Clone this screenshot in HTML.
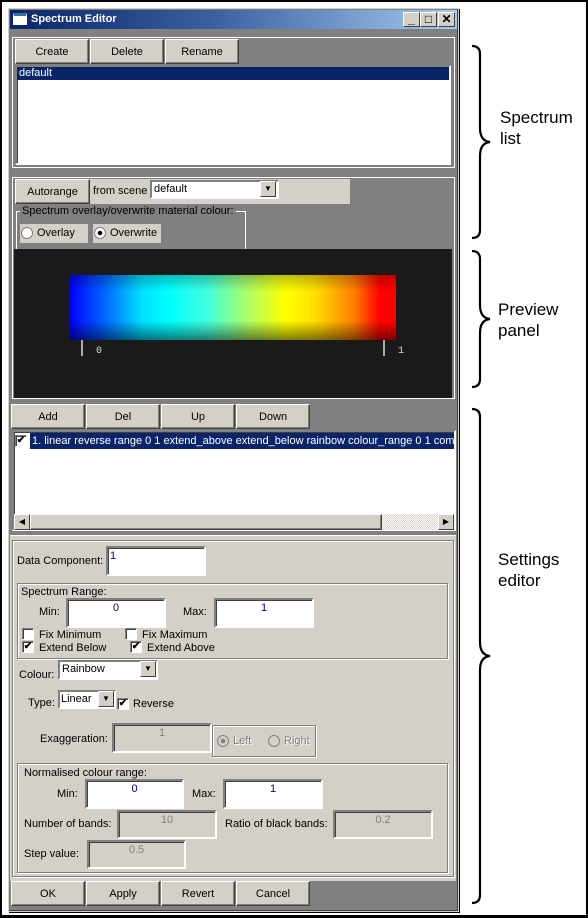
<!DOCTYPE html>
<html><head><meta charset="utf-8"><style>
*{box-sizing:border-box;margin:0;padding:0}
body{width:588px;height:918px;background:#fff;position:relative;overflow:hidden;font-family:"Liberation Sans",Arial,sans-serif;font-size:11px;color:#000}
.a{position:absolute}
.frame{left:0;top:0;width:588px;height:918px;border:2px solid #000;border-bottom-width:3px}
.win{left:8px;top:8px;width:451px;height:904px;background:#808080;border:1px solid #d4d0c8;box-shadow:inset -1px -1px 0 #404040,1px 1px 0 #000}
.title{left:10px;top:10px;width:447px;height:19px;background:linear-gradient(90deg,#0a246a 0%,#3a5fa0 45%,#a6caf0 100%);color:#fff;font-weight:bold;font-size:11px;line-height:19px;padding-left:21px}
.tb{top:12px;width:17px;height:15px;background:#d4d0c8;border:1px solid;border-color:#fff #404040 #404040 #fff;font-size:12px;line-height:13px;text-align:center;font-weight:bold;color:#000}
.btn{background:#d4d0c8;border:1px solid;border-color:#fff #404040 #404040 #fff;box-shadow:inset -1px -1px 0 #808080;text-align:center;line-height:25px;height:25px}
.sec{border:1px solid #fff}
.white{background:#fff;border:2px solid;border-color:#808080 #fff #fff #808080;box-shadow:inset 1px 1px 0 #404040}
.inp{background:#fff;border:2px solid;border-color:#808080 #fff #fff #808080;box-shadow:inset 1px 1px 0 #404040;color:#00007f;text-align:center;line-height:14px;padding-top:1px}
.dis{background:#d4d0c8;color:#808080}
.grp{border:1px solid #808080;box-shadow:1px 1px 0 #fff,inset 1px 1px 0 #fff}
.cb{width:12px;height:12px;background:#fff;border:1px solid;border-color:#808080 #fff #fff #808080;box-shadow:inset 1px 1px 0 #404040;font-size:10px;line-height:10px;text-align:center;font-weight:bold}
.dd{width:16px;height:16px;background:#d4d0c8;border:1px solid;border-color:#fff #404040 #404040 #fff;font-size:8px;line-height:14px;text-align:center}
.rad{width:12px;height:12px;border-radius:50%;background:#fff;border:1px solid #808080}
.ann{font-size:17px;color:#000;line-height:21px}
</style></head><body>
<div class="a frame"></div>
<div class="a win"></div>
<div class="a title">Spectrum Editor</div>
<div class="a" style="left:13px;top:13px;width:14px;height:12px;background:#fff;border:1px solid #fff;border-top:3px solid #3a6ea5"></div>
<div class="a tb" style="left:403px">_</div>
<div class="a tb" style="left:420px">□</div>
<div class="a tb" style="left:438px">✕</div>

<div class="a sec" style="left:12px;top:37px;width:443px;height:131px"></div>
<div class="a btn" style="left:15px;top:39px;width:74px">Create</div>
<div class="a btn" style="left:90px;top:39px;width:74px">Delete</div>
<div class="a btn" style="left:165px;top:39px;width:74px">Rename</div>
<div class="a white" style="left:15px;top:65px;width:436px;height:100px"></div>
<div class="a" style="left:17px;top:67px;width:432px;height:13px;background:#0a246a;color:#fff;line-height:13px;padding-left:2px">default</div>

<div class="a sec" style="left:12px;top:177px;width:443px;height:222px"></div>
<div class="a btn" style="left:15px;top:179px;width:75px">Autorange</div>
<div class="a" style="left:90px;top:179px;width:260px;height:25px;background:#d4d0c8"></div>
<div class="a" style="left:93px;top:185px">from scene</div>
<div class="a white" style="left:150px;top:180px;width:129px;height:19px;box-shadow:none;padding-left:2px;line-height:15px">default</div>
<div class="a dd" style="left:260px;top:181px">▼</div>
<div class="a" style="left:16px;top:211px;width:230px;height:38px;border:1px solid #fff;border-bottom:none"></div>
<div class="a" style="left:20px;top:205px;background:#808080;padding:0 2px;color:#000">Spectrum overlay/overwrite material colour:</div>
<div class="a" style="left:20px;top:224px;width:68px;height:19px;background:#d4d0c8"></div>
<div class="a rad" style="left:21px;top:227px"></div>
<div class="a" style="left:37px;top:227px">Overlay</div>
<div class="a" style="left:93px;top:224px;width:68px;height:19px;background:#d4d0c8"></div>
<div class="a rad" style="left:94px;top:227px;background:radial-gradient(circle,#000 0 2px,#fff 2.5px)"></div>
<div class="a" style="left:110px;top:227px">Overwrite</div>
<div class="a" style="left:14px;top:249px;width:438px;height:149px;background:#1a1a1a"></div>
<div class="a" style="left:70px;top:275px;width:326px;height:65px;background:linear-gradient(90deg,#0000ff 0%,#0060ff 10%,#00e0ff 22%,#00ffff 30%,#40ffe0 42%,#b0ff60 55%,#ffff00 66%,#ffe000 75%,#ff8000 87%,#ff0000 95%,#ff0000 100%)"></div>
<div class="a" style="left:70px;top:275px;width:326px;height:65px;background:linear-gradient(180deg,rgba(0,0,0,.25) 0%,rgba(0,0,0,0) 25%,rgba(0,0,0,0) 70%,rgba(0,0,0,.5) 100%)"></div>
<div class="a" style="left:81px;top:340px;width:2px;height:16px;background:#aaa"></div>
<div class="a" style="left:383px;top:340px;width:2px;height:16px;background:#aaa"></div>
<div class="a" style="left:96px;top:346px;color:#ddd;font-family:'Liberation Mono',monospace;font-size:10px">0</div>
<div class="a" style="left:398px;top:346px;color:#ddd;font-family:'Liberation Mono',monospace;font-size:10px">1</div>

<div class="a btn" style="left:11px;top:404px;width:74px">Add</div>
<div class="a btn" style="left:86px;top:404px;width:74px">Del</div>
<div class="a btn" style="left:161px;top:404px;width:74px">Up</div>
<div class="a btn" style="left:236px;top:404px;width:74px">Down</div>
<div class="a white" style="left:12px;top:430px;width:444px;height:101px"></div>
<div class="a cb" style="left:15px;top:435px">✔</div>
<div class="a" style="left:30px;top:433px;width:424px;height:16px;background:#0a246a;color:#fff;line-height:16px;padding-left:2px;white-space:nowrap;overflow:hidden">1. linear reverse range 0 1 extend_above extend_below rainbow colour_range 0 1 component 1</div>
<div class="a" style="left:14px;top:514px;width:440px;height:16px;background:repeating-conic-gradient(#d4d0c8 0 25%,#fff 0 50%) 0 0/2px 2px"></div>
<div class="a dd" style="left:14px;top:514px;font-size:8px">◀</div>
<div class="a btn" style="left:30px;top:514px;width:352px;height:16px"></div>
<div class="a dd" style="left:438px;top:514px">▶</div>

<div class="a" style="left:10px;top:535px;width:446px;height:346px;background:#d4d0c8;border-top:1px solid #fff"></div>
<div class="a grp" style="left:12px;top:540px;width:442px;height:337px"></div>
<div class="a" style="left:17px;top:555px">Data Component:</div>
<div class="a inp" style="left:106px;top:546px;width:100px;height:30px;text-align:left;padding-left:2px">1</div>
<div class="a grp" style="left:17px;top:583px;width:431px;height:76px"></div>
<div class="a" style="left:21px;top:586px">Spectrum Range:</div>
<div class="a" style="left:39px;top:606px">Min:</div>
<div class="a inp" style="left:66px;top:598px;width:100px;height:30px">0</div>
<div class="a" style="left:183px;top:606px">Max:</div>
<div class="a inp" style="left:214px;top:598px;width:100px;height:30px">1</div>
<div class="a cb" style="left:22px;top:628px"></div><div class="a" style="left:39px;top:629px">Fix Minimum</div>
<div class="a cb" style="left:125px;top:628px"></div><div class="a" style="left:142px;top:629px">Fix Maximum</div>
<div class="a cb" style="left:22px;top:641px">✔</div><div class="a" style="left:39px;top:642px">Extend Below</div>
<div class="a cb" style="left:130px;top:641px">✔</div><div class="a" style="left:147px;top:642px">Extend Above</div>
<div class="a" style="left:19px;top:669px">Colour:</div>
<div class="a white" style="left:58px;top:660px;width:100px;height:20px;box-shadow:none;padding-left:2px;line-height:14px">Rainbow</div>
<div class="a dd" style="left:140px;top:661px">▼</div>
<div class="a" style="left:28px;top:697px">Type:</div>
<div class="a white" style="left:58px;top:690px;width:58px;height:19px;box-shadow:none;padding-left:1px;line-height:14px">Linear</div>
<div class="a dd" style="left:98px;top:691px">▼</div>
<div class="a cb" style="left:117px;top:698px">✔</div><div class="a" style="left:133px;top:698px">Reverse</div>
<div class="a" style="left:40px;top:733px">Exaggeration:</div>
<div class="a inp dis" style="left:112px;top:723px;width:100px;height:30px;color:#808080">1</div>
<div class="a grp" style="left:212px;top:725px;width:104px;height:32px"></div>
<div class="a rad" style="left:217px;top:735px;background:radial-gradient(circle,#808080 0 2px,#d4d0c8 2.5px)"></div>
<div class="a" style="left:233px;top:735px;color:#808080;text-shadow:1px 1px 0 #fff">Left</div>
<div class="a rad" style="left:268px;top:735px;background:#d4d0c8"></div>
<div class="a" style="left:284px;top:735px;color:#808080;text-shadow:1px 1px 0 #fff">Right</div>
<div class="a grp" style="left:17px;top:763px;width:431px;height:110px"></div>
<div class="a" style="left:24px;top:767px">Normalised colour range:</div>
<div class="a" style="left:57px;top:788px">Min:</div>
<div class="a inp" style="left:85px;top:779px;width:99px;height:30px">0</div>
<div class="a" style="left:192px;top:788px">Max:</div>
<div class="a inp" style="left:223px;top:779px;width:100px;height:30px">1</div>
<div class="a" style="left:24px;top:818px">Number of bands:</div>
<div class="a inp dis" style="left:117px;top:810px;width:100px;height:29px;color:#808080">10</div>
<div class="a" style="left:225px;top:818px">Ratio of black bands:</div>
<div class="a inp dis" style="left:333px;top:810px;width:100px;height:29px;color:#808080">0.2</div>
<div class="a" style="left:24px;top:848px">Step value:</div>
<div class="a inp dis" style="left:87px;top:840px;width:99px;height:29px;color:#808080">0.5</div>

<div class="a btn" style="left:11px;top:881px;width:74px">OK</div>
<div class="a btn" style="left:86px;top:881px;width:74px">Apply</div>
<div class="a btn" style="left:161px;top:881px;width:74px">Revert</div>
<div class="a btn" style="left:236px;top:881px;width:74px">Cancel</div>

<svg class="a" style="left:0;top:0" width="588" height="918">
<g fill="none" stroke="#000" stroke-width="2.2">
<path d="M472 46 q8 0 8 8 v74 q0 13 10 14 q-10 1 -10 14 v74 q0 8 -8 8"/>
<path d="M472 251 q8 0 8 8 v46 q0 13 10 14 q-10 1 -10 14 v46 q0 8 -8 8"/>
<path d="M472 409 q8 0 8 8 v225 q0 13 10 14 q-10 1 -10 14 v225 q0 8 -8 8"/>
</g></svg>
<div class="a ann" style="left:500px;top:107px">Spectrum<br>list</div>
<div class="a ann" style="left:498px;top:299px">Preview<br>panel</div>
<div class="a ann" style="left:498px;top:549px">Settings<br>editor</div>
</body></html>
